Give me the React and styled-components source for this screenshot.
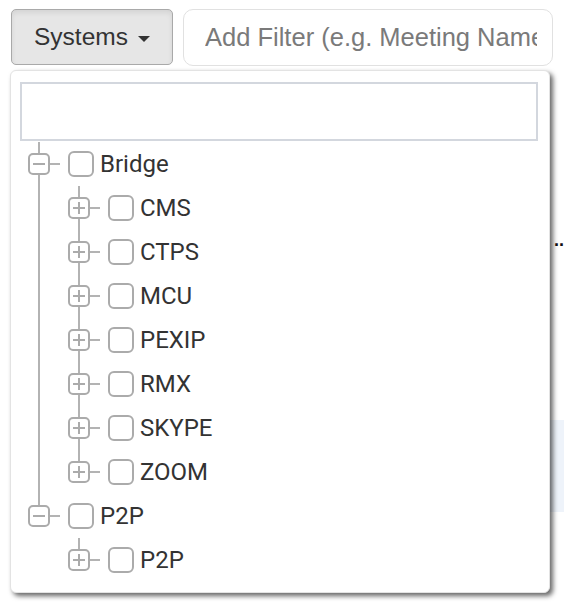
import React from 'react';
import styled, { createGlobalStyle } from 'styled-components';

const GlobalStyle = createGlobalStyle`
  html, body {
    margin: 0;
    padding: 0;
    background: #fff;
  }
  body {
    font-family: 'Liberation Sans', Arial, sans-serif;
  }
`;

const tree = [
  {
    label: 'Bridge',
    expanded: true,
    children: ['CMS', 'CTPS', 'MCU', 'PEXIP', 'RMX', 'SKYPE', 'ZOOM'].map(label => ({ label })),
  },
  {
    label: 'P2P',
    expanded: true,
    children: [{ label: 'P2P' }],
  },
];

function ToggleIcon({ expanded }) {
  return (
    <svg width="22" height="22" viewBox="0 0 22 22">
      <rect x="1" y="1" width="20" height="20" rx="4" fill="#fff" stroke="#ababab" strokeWidth="2" />
      <path d={expanded ? 'M5 11h12' : 'M5 11h12M11 5v12'} stroke="#ababab" strokeWidth="2" fill="none" />
    </svg>
  );
}

function TreeNodes({ nodes, nested }) {
  return (
    <Branch $nested={nested}>
      {nodes.map((node, i) => (
        <Node key={node.label + i} $last={i === nodes.length - 1}>
          <Row>
            <Toggle>
              <ToggleIcon expanded={!!node.expanded} />
            </Toggle>
            <Stub />
            <Checkbox type="button" aria-label={node.label} />
            <Label>{node.label}</Label>
          </Row>
          {node.expanded && node.children && <TreeNodes nodes={node.children} nested />}
        </Node>
      ))}
    </Branch>
  );
}

export default function App() {
  return (
    <Page>
      <GlobalStyle />
      <Toolbar>
        <DropButton>
          Systems
          <Caret />
        </DropButton>
        <FilterInput placeholder="Add Filter (e.g. Meeting Name)" />
      </Toolbar>

      <Behind>
        <Ellipsis>..</Ellipsis>
        <ShadedRow $gap={168} $height={92} />
        <ShadedRow $gap={91} $height={20} />
      </Behind>

      <Menu>
        <MenuSearch />
        <TreeNodes nodes={tree} />
      </Menu>
    </Page>
  );
}

const Page = styled.div`
  position: relative;
  width: 564px;
  height: 602px;
  overflow: hidden;
  padding: 9px 0 0 11px;
  box-sizing: border-box;
`;

const Toolbar = styled.div`
  display: flex;
  align-items: flex-start;
  gap: 10px;
`;

const DropButton = styled.button`
  display: flex;
  align-items: center;
  justify-content: center;
  gap: 10px;
  width: 162px;
  height: 56px;
  padding: 0;
  background: #e6e6e6;
  border: 1px solid #a9a9a9;
  border-radius: 5px;
  box-shadow: inset 0 3px 5px rgba(0, 0, 0, 0.08);
  color: #333;
  font-family: 'Liberation Sans', Arial, sans-serif;
  font-size: 24.5px;
  cursor: pointer;
`;

const Caret = styled.span`
  width: 0;
  height: 0;
  margin-top: 3px;
  border-left: 6px solid transparent;
  border-right: 6px solid transparent;
  border-top: 6px solid #333;
`;

const FilterInput = styled.input`
  width: 370px;
  height: 57px;
  box-sizing: border-box;
  padding: 0 15px 0 21px;
  border: 1px solid #e1e1e1;
  border-radius: 10px;
  font-family: 'Liberation Sans', Arial, sans-serif;
  font-size: 25.5px;
  color: #555;
  outline: none;

  &::placeholder {
    color: #7a7a7a;
  }
`;

const Behind = styled.div`
  display: flex;
  flex-direction: column;
`;

const Ellipsis = styled.div`
  margin-top: 162px;
  text-align: right;
  font-family: 'Liberation Sans', Arial, sans-serif;
  font-size: 18px;
  font-weight: bold;
  line-height: 24px;
  color: #111;
`;

const ShadedRow = styled.div`
  margin-top: ${p => p.$gap}px;
  height: ${p => p.$height}px;
  margin-left: 14px;
  background: #eef3fa;
`;

const Menu = styled.div`
  position: absolute;
  top: 70px;
  left: 10px;
  width: 540px;
  height: 523px;
  box-sizing: border-box;
  padding: 11px 11px 0 9px;
  background: #fff;
  border: 1px solid #e3e3e3;
  border-radius: 6px;
  box-shadow: 3px 3px 5px rgba(0, 0, 0, 0.6);
  z-index: 10;
`;

const MenuSearch = styled.div`
  height: 59px;
  box-sizing: border-box;
  border: 2px solid #d3d7de;
`;

const Branch = styled.ul`
  list-style: none;
  margin: 0;
  padding: 0 0 0 ${p => (p.$nested ? 40 : 8)}px;
  padding-top: ${p => (p.$nested ? 0 : 1)}px;
`;

const Node = styled.li`
  position: relative;

  &::before {
    content: '';
    position: absolute;
    left: 10px;
    top: 0;
    width: 2px;
    height: ${p => (p.$last ? '22px' : '100%')};
    background: #b3b3b3;
  }
`;

const Row = styled.div`
  display: flex;
  align-items: center;
  height: 44px;
`;

const Toggle = styled.span`
  position: relative;
  z-index: 1;
  display: flex;
  width: 22px;
  height: 22px;
`;

const Stub = styled.span`
  width: 10px;
  height: 2px;
  margin-right: 8px;
  background: #b3b3b3;
`;

const Checkbox = styled.button`
  width: 26px;
  height: 26px;
  padding: 0;
  box-sizing: border-box;
  border: 2px solid #ababab;
  border-radius: 6px;
  background: #fff;
`;

const Label = styled.span`
  margin-left: 6px;
  font-family: Roboto, 'Noto Sans', sans-serif;
  font-size: 24px;
  color: #333;
`;
